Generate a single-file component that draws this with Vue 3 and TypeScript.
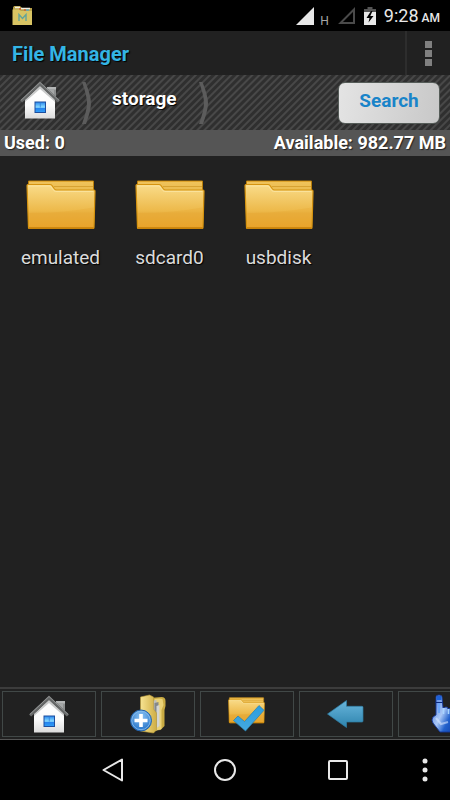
<script setup lang="ts">
import { ref } from 'vue'

interface Entry {
  name: string
}

interface Tool {
  id: string
  label: string
}

const entries = ref<Entry[]>([{ name: 'emulated' }, { name: 'sdcard0' }, { name: 'usbdisk' }])

const tools: Tool[] = [
  { id: 'home', label: 'Home' },
  { id: 'new-folder', label: 'New folder' },
  { id: 'select', label: 'Select' },
  { id: 'back', label: 'Back' },
  { id: 'hand', label: 'Multi select' },
]
</script>

<template>
  <div class="screen">
    <svg class="sprites" width="0" height="0" aria-hidden="true">
      <defs>
        <linearGradient id="wall" x1="0" y1="0" x2="0" y2="1">
          <stop offset="0" stop-color="#fff" />
          <stop offset="0.6" stop-color="#fbfbfb" />
          <stop offset="1" stop-color="#dcdcdc" />
        </linearGradient>
        <linearGradient id="pane" x1="0" y1="0" x2="0" y2="1">
          <stop offset="0" stop-color="#2f8df0" />
          <stop offset="0.5" stop-color="#8adcff" />
          <stop offset="0.62" stop-color="#2583ee" />
          <stop offset="1" stop-color="#2f9cf6" />
        </linearGradient>
        <linearGradient id="folder-front" x1="0" y1="0" x2="0" y2="1">
          <stop offset="0" stop-color="#f9dc8a" />
          <stop offset="0.6" stop-color="#edb94a" />
          <stop offset="0.66" stop-color="#e9b040" />
          <stop offset="1" stop-color="#eba62c" />
        </linearGradient>
        <linearGradient id="folder-back" x1="0" y1="0" x2="0" y2="1">
          <stop offset="0" stop-color="#f0c45c" />
          <stop offset="1" stop-color="#d79a1e" />
        </linearGradient>
        <linearGradient id="arrow-fill" x1="0" y1="0" x2="0" y2="1">
          <stop offset="0" stop-color="#69b6dc" />
          <stop offset="1" stop-color="#2d83ad" />
        </linearGradient>
        <linearGradient id="check-fill" x1="0" y1="0" x2="0" y2="1">
          <stop offset="0" stop-color="#2b9ee0" />
          <stop offset="1" stop-color="#45a9e0" />
        </linearGradient>
        <linearGradient id="yellow-fill" x1="0" y1="0" x2="1" y2="0">
          <stop offset="0" stop-color="#f7e391" />
          <stop offset="1" stop-color="#cfae45" />
        </linearGradient>
        <radialGradient id="badge-fill" cx="0.5" cy="0.3" r="0.7">
          <stop offset="0" stop-color="#8cc4f4" />
          <stop offset="1" stop-color="#2170c8" />
        </radialGradient>
        <linearGradient id="hand-fill" x1="0" y1="0.3" x2="1" y2="1">
          <stop offset="0" stop-color="#5f8ae0" />
          <stop offset="0.35" stop-color="#a9c7f6" />
          <stop offset="0.6" stop-color="#2261cc" />
          <stop offset="1" stop-color="#0b38a0" />
        </linearGradient>

        <symbol id="home" viewBox="0 0 40 38">
          <path d="M27 6h9v12h-7z" fill="#8d8f8f" />
          <path d="M27 6h9v2.500h-9z" fill="#b4b6b6" />
          <path d="M29 9h5v7h-5z" fill="#a5a7a7" />
          <path d="M5 19 20 5l15 14v18.500H5z" fill="url(#wall)" />
          <path d="M5 19 20 5l15 14v2L20 8 5 21z" fill="#c9caca" />
          <path d="M20 0.500 40 19.500l-2.200 2L20 5 2.200 21.500 0 19.500z" fill="#656767" />
          <path d="M1 19.300 20 1.500 39 19.300" fill="none" stroke="#959797" stroke-width="1" />
          <path d="M14.500 20.500h11.500v11.500H14.500z" fill="#1d4e9e" />
          <path d="M15.500 21.500h9.500v9.500h-9.500z" fill="url(#pane)" />
          <path d="M20.300 21.500v5" stroke="#2a7bd6" stroke-width="0.700" />
        </symbol>

        <symbol id="folder" viewBox="0 0 70 50">
          <path d="M2.500 1h65v46h-65z" fill="url(#folder-back)" stroke="#b97f0c" stroke-width="1" />
          <path d="M3 1.500h64" stroke="#dfa42c" stroke-width="1.200" />
          <path d="M28 6.500h39" stroke="#c98f1c" stroke-width="1" opacity="0.600" />
          <path d="M1 5.500q0-1 1-1h22q1.200 0 2 1l2.500 3.500q.8 1 2 1H68q1 0 1 1L68 47.500q0 1-1 1H3.500q-1 0-1-1z" fill="url(#folder-front)" stroke="#d5930f" stroke-width="1.200" />
          <path d="M2.300 6h22l3.500 4.500q.8.900 2 .9h37.500" fill="none" stroke="#fbe5a4" stroke-width="0.900" />
          <path d="M3.500 33q33 0 64-5.500v20h-64z" fill="#e59c20" opacity="0.180" />
          <path d="M3 48h64.500" stroke="#c67f08" stroke-width="1.300" />
        </symbol>

        <symbol id="new-folder" viewBox="0 0 40 40">
          <g transform="translate(1.500 0)">
            <path d="M20 4 32 3q4 0 4 4v5l-1 4v16l-4 4-11 1z" fill="#c9ab43" />
            <path d="M25 5q5-1 8 0l1 6-2 5v19l-7 2z" fill="#ead277" />
            <path d="M22 7l5-1v30l-5 1z" fill="#bfc0bd" />
            <path d="M25 9l4-1v24l-4 3z" fill="#85888a" />
            <path d="M27 12l3-1v21l-3 2z" fill="#d4d5d2" />
            <path d="M11 3 20 1l4 2v12l3 4v17l-3 3-13-2z" fill="url(#yellow-fill)" stroke="#b99a37" stroke-width="0.600" />
            <circle cx="11.500" cy="26.500" r="10.500" fill="url(#badge-fill)" stroke="#2564ac" stroke-width="1" />
            <circle cx="11.500" cy="26.500" r="9.200" fill="none" stroke="#8ec1ee" stroke-width="0.800" />
            <path d="M11.500 20v13M5 26.500h13" stroke="#fff" stroke-width="3.600" />
          </g>
        </symbol>

        <symbol id="select" viewBox="0 0 40 40">
          <use href="#folder" x="1" y="3" width="37" height="27" />
          <path d="M6.500 26.500 11 22l6.500 5.500L32 11.500l5 4.800L18.500 37z" fill="url(#check-fill)" stroke="#287fae" stroke-width="0.700" />
        </symbol>

        <symbol id="back" viewBox="0 0 40 40">
          <path d="M1.500 20 20.500 6.500v5.800H36q1 0 1 1V27q0 1-1 1H20.500v5.500z" fill="url(#arrow-fill)" stroke="#2f7ea5" stroke-width="0.700" />
        </symbol>

        <symbol id="hand" viewBox="0 0 40 40">
          <path d="M11 3q0-2 3-2t3 2l1 11 3-1q2 0 2 2l3-1 2 2h3q2 1 2 4v10l-3 8H15L8 29q-2-3 0-6l3-2z" fill="url(#hand-fill)" stroke="#15389b" stroke-width="0.900" />
          <path d="M11.500 2h5v4h-5z" fill="#1c62d8" />
          <path d="M14 8v11" stroke="#6ca6fa" stroke-width="2" />
          <path d="M10.500 8.500h7" stroke="#0b2a80" stroke-width="1" />
          <path d="M18.500 14v6M23.500 15v5M28 16v5" stroke="#a8d4ff" stroke-width="1.500" />
          <path d="M11 24l5 6 7-2" fill="none" stroke="#d3e5ff" stroke-width="2" opacity="0.600" />
        </symbol>
      </defs>
    </svg>

    <div class="status">
      <svg width="21" height="20" viewBox="0 0 21 20" aria-hidden="true">
        <path d="M1 1.500 2 0h6l2 2h10v17H1z" fill="#b8a24a" />
        <path d="M3 1.500h5M9 2.500h9" stroke="#f3efdf" stroke-width="1.500" />
        <path d="M7 3h2M12 4h2" stroke="#cc5b3a" stroke-width="1.300" />
        <path d="M14 4h3" stroke="#4ba9cf" stroke-width="1.300" />
        <path d="M0.500 3.500H7L9 5h11v14H0.500z" fill="#d8c463" />
        <path d="M7 15V8.500l3.500 4L14 8.500V15" fill="none" stroke="#62a39b" stroke-width="1.400" />
      </svg>
      <div class="status-right">
        <svg width="18" height="18" viewBox="0 0 18 18" aria-hidden="true"><path d="M18 0v18H0z" fill="#e8e8e8" /></svg>
        <span class="network">H</span>
        <svg width="18" height="18" viewBox="0 0 18 18" aria-hidden="true"><path d="M16 2.500V16H2.500z" fill="none" stroke="#4a4a4a" stroke-width="2" /></svg>
        <svg class="battery" width="12" height="18" viewBox="0 0 12 18" aria-hidden="true">
          <path d="M3.500 0h5v2H12v4H0V2h3.500z" fill="#555" />
          <path d="M0 5h12v13H0z" fill="#e8e8e8" />
          <path d="M7 4 2.500 11h3L4.500 15.500 9.500 9H6.300L8.500 4z" fill="#000" />
        </svg>
        <span class="clock"><span>9:28</span><span class="meridiem">AM</span></span>
      </div>
    </div>

    <header class="title-bar">
      <h1>File Manager</h1>
      <button class="overflow" type="button" aria-label="More options">
        <i class="square"></i><i class="square"></i><i class="square"></i>
      </button>
    </header>

    <nav class="crumbs" aria-label="Path">
      <a class="crumb-home" href="#home" aria-label="Home">
        <svg width="40" height="38" aria-hidden="true"><use href="#home" /></svg>
      </a>
      <svg class="chevron" width="11" height="44" viewBox="0 0 11 44" aria-hidden="true"><path d="M1 1h3.500Q10 15 10 22T5 43H1Q6 29 6 22T1 1z" fill="#5c5c5c" /></svg>
      <a class="crumb" href="#storage">storage</a>
      <svg class="chevron" width="11" height="44" viewBox="0 0 11 44" aria-hidden="true"><path d="M1 1h3.500Q10 15 10 22T5 43H1Q6 29 6 22T1 1z" fill="#5c5c5c" /></svg>
      <button class="search" type="button">Search</button>
    </nav>

    <div class="usage">
      <span>Used: 0</span>
      <span>Available: 982.77 MB</span>
    </div>

    <main class="files">
      <a v-for="entry in entries" :key="entry.name" class="file" :href="'#' + entry.name">
        <svg width="70" height="50" aria-hidden="true"><use href="#folder" /></svg>
        <span>{{ entry.name }}</span>
      </a>
    </main>

    <div class="toolbar">
      <button v-for="tool in tools" :key="tool.id" class="tool" type="button" :aria-label="tool.label">
        <svg width="40" height="40" aria-hidden="true"><use :href="'#' + tool.id" /></svg>
      </button>
    </div>

    <footer class="system">
      <span></span>
      <button type="button" aria-label="Back">
        <svg width="24" height="24" viewBox="0 0 24 24"><path d="M21 1.500v21L2.500 12z" fill="none" stroke="#e8e8e8" stroke-width="2" stroke-linejoin="round" /></svg>
      </button>
      <button type="button" aria-label="Home">
        <svg width="24" height="24" viewBox="0 0 24 24"><circle cx="12" cy="12" r="10" fill="none" stroke="#e8e8e8" stroke-width="2" /></svg>
      </button>
      <button type="button" aria-label="Recent apps">
        <svg width="24" height="24" viewBox="0 0 24 24"><rect x="3" y="3" width="18" height="18" rx="1" fill="none" stroke="#e8e8e8" stroke-width="2" /></svg>
      </button>
      <button class="system-menu" type="button" aria-label="Menu">
        <svg width="6" height="24" viewBox="0 0 6 24"><g fill="#e8e8e8"><circle cx="3" cy="3" r="2.500" /><circle cx="3" cy="12" r="2.500" /><circle cx="3" cy="21" r="2.500" /></g></svg>
      </button>
    </footer>
  </div>
</template>

<style>
body {
  background: #212121;
}
</style>

<style scoped>
.screen {
  display: flex;
  flex-direction: column;
  min-height: 100vh;
  overflow: hidden;
  background: #212121;
  color: #fff;
  font-family: Roboto, 'Liberation Sans', sans-serif;
}

.sprites {
  position: absolute;
}

svg {
  display: block;
  flex: none;
}

a {
  color: inherit;
  text-decoration: none;
}

button {
  margin: 0;
  padding: 0;
  border: 0;
  background: none;
  font-family: inherit;
}

.status {
  display: flex;
  justify-content: space-between;
  align-items: center;
  height: 31px;
  padding: 0 10px 0 12px;
  background: #000;
}

.status-right {
  display: flex;
  align-items: center;
  color: #e8e8e8;
}

.network {
  padding: 11px 9px 0 6px;
  color: #a8a8a8;
  font-size: 12px;
  line-height: 12px;
}

.battery {
  margin: 0 8px;
}

.clock {
  display: flex;
  align-items: baseline;
  gap: 3px;
  padding-top: 3px;
  font-size: 18px;
  line-height: 24px;
}

.meridiem {
  font-size: 12px;
  font-weight: 500;
}

.title-bar {
  display: flex;
  justify-content: space-between;
  height: 44px;
  padding-left: 12px;
}

h1 {
  margin: 0;
  color: #33b5e5;
  font-size: 20px;
  font-weight: 700;
  line-height: 46px;
  text-shadow: 1px 1px 1px #000;
}

.overflow {
  display: flex;
  flex-direction: column;
  align-items: center;
  justify-content: center;
  gap: 2px;
  width: 45px;
  border-left: 2px solid #2d2d2d;
}

.square {
  width: 7px;
  height: 7px;
  background: #808080;
}

.crumbs {
  display: flex;
  align-items: center;
  height: 55px;
  padding: 0 10px 0 20px;
  background: repeating-linear-gradient(135deg, #2f2f2f 0 2px, #484848 3px 4px, #2f2f2f 5px);
}

.crumb-home {
  padding-bottom: 6px;
}

.chevron {
  margin-left: 21px;
}

.crumb {
  padding-bottom: 8px;
  margin-left: 20px;
  font-size: 19px;
  font-weight: 700;
  line-height: 24px;
  text-shadow: 1px 1px 1px #000;
}

.search {
  width: 102px;
  height: 42px;
  margin-left: auto;
  padding-bottom: 5px;
  border: 1px solid #555c58;
  border-radius: 7px;
  background: linear-gradient(100deg, #e4e4e4, #c8c8c8);
  color: #1984c9;
  font-size: 19px;
  font-weight: 700;
}

.usage {
  display: flex;
  justify-content: space-between;
  height: 26px;
  padding: 0 4px;
  background: #555;
  font-size: 18px;
  font-weight: 700;
  line-height: 26px;
  text-shadow: 1px 1px 1px #222;
}

.files {
  display: grid;
  flex: 1;
  grid-template-columns: repeat(auto-fill, minmax(109px, 1fr));
  align-content: start;
  padding: 24px 8px 24px 6px;
}

.file {
  display: flex;
  flex-direction: column;
  align-items: center;
  gap: 16px;
  color: #dcdcdc;
  font-size: 19px;
  line-height: 24px;
  text-shadow: 1px 1px 1px #000;
}

.toolbar {
  display: flex;
  gap: 5px;
  height: 53px;
  box-sizing: border-box;
  padding: 2px 0 2px 2px;
  overflow: hidden;
  border-top: 2px solid #3c3c3c;
  border-bottom: 1px solid #555;
}

.tool {
  display: flex;
  flex: none;
  align-items: center;
  justify-content: center;
  width: 94px;
  border: 1px solid #414847;
}

.system {
  display: grid;
  grid-template-columns: 1fr 2fr 2fr 2fr 1fr;
  align-items: center;
  height: 60px;
  background: #000;
}

.system button {
  display: flex;
  justify-content: center;
}

.system .system-menu {
  padding-left: 6px;
}
</style>
